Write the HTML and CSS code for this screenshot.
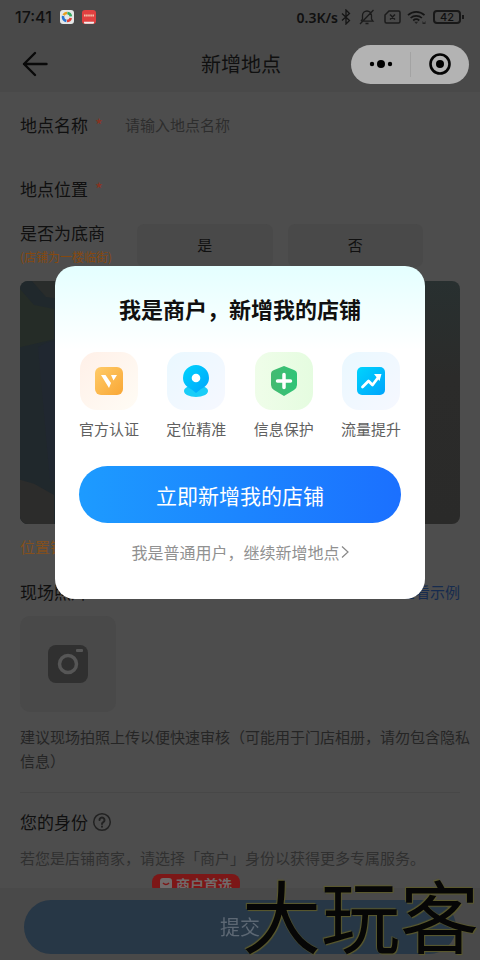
FILE: index.html
```html
<!DOCTYPE html>
<html lang="zh-CN">
<head>
<meta charset="utf-8">
<meta name="viewport" content="width=device-width, initial-scale=1">
<title>新增地点</title>
<link rel="stylesheet" href="styles.css">
</head>
<body>
<div class="status">
  <span class="time">17:41</span>
  <svg class="app" width="14" height="14" viewBox="0 0 14 14"><rect width="14" height="14" rx="3" fill="#e4e8e8"/><g fill="none" stroke-width="2.6"><path d="M3.6 5.2A4 4 0 0 1 7.2 3" stroke="#e8a020"/><path d="M7.4 3a4 4 0 0 1 3.5 3.4" stroke="#35a860"/><path d="M10.8 8A4 4 0 0 1 7 11" stroke="#dc4238"/><path d="M6.4 10.9A4 4 0 0 1 3.1 6" stroke="#2874d0"/></g></svg>
  <svg class="app" width="14" height="14" viewBox="0 0 14 14"><rect width="14" height="14" rx="3" fill="#e04040"/><path d="M2 5.5h10" stroke="#f0c0a8" stroke-width="2" stroke-dasharray="1.6 .5"/><path d="M2 11.8h10v1a1 1 0 0 1-1 1H3a1 1 0 0 1-1-1z" fill="#eee"/></svg>
  <span class="speed">0.3K/s</span>
  <svg class="bt" width="10" height="16" viewBox="0 0 10 16"><path d="M1 4.5l7.5 7L5 15V1l3.500 3.500L1 11.500" fill="none" stroke="#151515" stroke-width="1.300"/></svg>
  <svg class="bell" width="16" height="16" viewBox="0 0 16 16"><path d="M3 12.200h11L12.500 10V6.500a4.500 4.500 0 0 0-9 0V10L2 12.200M6.500 14.500h3M1 15L14.500 1" fill="none" stroke="#1b1b1b" stroke-width="1.300"/></svg>
  <svg class="sim" width="17" height="14" viewBox="0 0 17 14"><path d="M5 1h9.500a1.500 1.500 0 0 1 1.500 1.500v9a1.500 1.500 0 0 1-1.500 1.500h-12A1.500 1.500 0 0 1 1 11.500V5zM6 4.500l5 5m0-5l-5 5" fill="none" stroke="#1b1b1b" stroke-width="1.500"/></svg>
  <svg class="wifi" width="20" height="15" viewBox="0 0 20 15"><path d="M1 5.200a12 12 0 0 1 16.500 0M3.600 8a8.300 8.300 0 0 1 11.300 0M6.200 10.500a4.800 4.800 0 0 1 6.100 0" fill="none" stroke="#151515" stroke-width="1.700"/><path d="M7.200 11.700h4L9.200 14zM15.500 11l1.500 2 1.500-2v3h-3z" fill="#222"/></svg>
  <span class="battery">42</span>
</div>
<header class="nav">
  <button class="back" type="button" aria-label="返回"><svg width="26" height="26" viewBox="0 0 26 26"><path d="M24.500 13H2M13 2L2 13l11 11" fill="none" stroke="#090909" stroke-width="2.400" stroke-linecap="round" stroke-linejoin="round"/></svg></button>
  <h1>新增地点</h1>
  <div class="capsule">
    <button type="button" aria-label="更多"><svg width="24" height="10" viewBox="0 0 24 10"><circle cx="3" cy="5" r="2.200"/><circle cx="12" cy="5" r="4"/><circle cx="21" cy="5" r="2.200"/></svg></button>
    <button type="button" aria-label="关闭"><svg width="22" height="22" viewBox="0 0 22 22"><circle cx="11" cy="11" r="9.500" fill="none" stroke="#050505" stroke-width="2.600"/><circle cx="11" cy="11" r="4"/></svg></button>
  </div>
</header>
<main class="form">
  <div class="row name">
    <label for="place">地点名称<i>*</i></label>
    <input id="place" type="text" placeholder="请输入地点名称">
  </div>
  <h2 class="row place">地点位置<i>*</i></h2>
  <div class="shop">
    <div class="question">是否为底商<small>(店铺为一楼临街)</small></div>
    <button type="button">是</button>
    <button type="button">否</button>
  </div>
  <svg class="map" viewBox="0 0 440 242" preserveAspectRatio="none">
    <defs><linearGradient id="land" x1="0" y1="0" x2="0" y2="1"><stop offset="0" stop-color="#283030"/><stop offset=".4" stop-color="#2b2b2a"/><stop offset="1" stop-color="#2a2a29"/></linearGradient></defs>
    <rect width="440" height="242" fill="url(#land)"/>
    <path d="M0 0h60v242H0z" fill="#20282c"/><path d="M0 8l14 16 20 4v30L0 66z" fill="#252c27"/><path d="M12 0h30v18l-16-2z" fill="#292c2b"/><path d="M0 198l14 4 20 11v29H0z" fill="#2c2c2b"/><path d="M18 66q16-10 24-4v140l-12-3z" fill="#202730"/>
  </svg>
  <p class="warn">位置错误</p>
  <div class="photo-title"><h2>现场照片</h2><a href="#example">查看示例</a></div>
  <button class="upload" type="button" aria-label="上传照片"><svg width="42" height="40" viewBox="0 0 42 40"><rect x="1" y="1" width="40" height="38" rx="8" fill="#303030"/><circle cx="21" cy="20" r="8.500" fill="none" stroke="#565656" stroke-width="3.500"/><rect x="29" y="5" width="7" height="3" rx="1" fill="#565656"/></svg></button>
  <p class="note">建议现场拍照上传以便快速审核（可能用于门店相册，请勿包含隐私信息）</p>
  <h2 class="identity">您的身份<svg width="20" height="20" viewBox="0 0 20 20"><g fill="none" stroke="#222" stroke-linecap="round"><circle cx="10" cy="10" r="8.300" stroke-width="1.500"/><path d="M7.500 8a2.500 2.500 0 1 1 3.800 2.100Q10 10.900 10 12" stroke-width="2"/><path d="M10 14.600v.2" stroke-width="2"/></g></svg></h2>
  <p class="hint">若您是店铺商家，请选择「商户」身份以获得更多专属服务。</p>
  <div class="badge"><svg width="12" height="12" viewBox="0 0 12 12"><rect width="12" height="12" rx="3" fill="#706a6a"/><path d="M3 5q3 3 6 0" fill="none" stroke="#7c1717" stroke-width="1.500"/></svg>商户首选</div>
</main>
<footer class="submit"><button type="button">提交</button><span class="mark">大玩客</span></footer>
<div class="overlay">
  <section class="dialog" role="dialog" aria-labelledby="dialog-title">
    <h2 id="dialog-title">我是商户，新增我的店铺</h2>
    <ul>
      <li><span class="tile gold"><svg width="28" height="28" viewBox="0 0 28 28"><defs><linearGradient id="g" x1="0" y1="0" x2="1" y2="1"><stop stop-color="#ffcb68"/><stop offset="1" stop-color="#f9a735"/></linearGradient></defs><rect width="28" height="28" rx="6" fill="url(#g)"/><path d="M6 8h4.500l5.500 8-2 5zM16 8h6l-3.500 5.500z" fill="#fff"/></svg></span>官方认证</li>
      <li><span class="tile blue"><svg width="28" height="34" viewBox="0 0 28 34"><defs><linearGradient id="b" x1="0" y1="0" x2="1" y2="1"><stop stop-color="#00d4fd"/><stop offset="1" stop-color="#00a4fc"/></linearGradient></defs><ellipse cx="14" cy="27" rx="12" ry="6" fill="#19cdf8"/><path d="M14 1a13 13 0 0 1 13 13c0 6-4 9-8 11l-5 4-5-4c-4-2-8-5-8-11A13 13 0 0 1 14 1z" fill="url(#b)"/><circle cx="14" cy="14" r="4.300" fill="#fff"/></svg></span>定位精准</li>
      <li><span class="tile green"><svg width="28" height="32" viewBox="0 0 28 32"><defs><linearGradient id="s"><stop stop-color="#45ba71"/><stop offset="1" stop-color="#2fc477"/></linearGradient></defs><path d="M14 1l10 4q3 1 3 4v11q0 3-3 5l-10 6-10-6q-3-2-3-5V9q0-3 3-4z" fill="url(#s)"/><path d="M14 9.500v13M7.500 16h13" stroke="#fff" stroke-width="3.500" stroke-linecap="round"/></svg></span>信息保护</li>
      <li><span class="tile blue"><svg width="28" height="28" viewBox="0 0 28 28"><rect width="28" height="28" rx="5" fill="url(#b)"/><path d="M5.500 20l6-6 4 4 6-8" fill="none" stroke="#fff" stroke-width="2.800" stroke-linecap="round" stroke-linejoin="round"/><path d="M17 7h7.500l-2 7z" fill="#fff"/></svg></span>流量提升</li>
    </ul>
    <button class="cta" type="button">立即新增我的店铺</button>
    <a class="skip" href="#continue">我是普通用户，继续新增地点<svg width="8" height="14" viewBox="0 0 8 14"><path d="M1 1.500L7 7l-6 5.500" fill="none" stroke="#888" stroke-width="1.200"/></svg></a>
  </section>
</div>
</body>
</html>
```
FILE: styles.css
```css
* { box-sizing: border-box; }
body {
  margin: 0;
  min-height: 100vh;
  background: #4d4d4d;
  color: #101010;
  font-family: "Noto Sans CJK SC", "Noto Sans", sans-serif;
  font-size: 15px;
  line-height: 24px;
  overflow: hidden;
}
h1, h2, p, ul { margin: 0; padding: 0; font-weight: 400; }
button { border: 0; padding: 0; font: inherit; color: inherit; background: none; }
a { text-decoration: none; }
svg { display: block; flex: none; }

.status {
  display: flex;
  align-items: center;
  height: 34px;
  padding: 0 15px;
  background: #494949;
}
.time { font: 500 16px "Inter", sans-serif; }
.app { margin-left: 8px; }
.speed { margin-left: auto; font: 600 14px "Noto Sans", sans-serif; }
.bt { margin-left: 3px; }
.bell { margin-left: 8px; }
.sim { margin-left: 9px; }
.wifi { margin-left: 6px; }
.battery {
  position: relative;
  width: 28px;
  height: 14px;
  margin: 0 4px 0 6px;
  border: 2px solid #181818;
  border-radius: 4px;
  font: 500 11px/10px "Inter", sans-serif;
  text-align: center;
}
.battery::after {
  content: "";
  position: absolute;
  right: -5px;
  top: 3px;
  width: 2px;
  height: 4px;
  background: #181818;
}
.nav {
  display: grid;
  grid-template-columns: 1fr auto 1fr;
  align-items: center;
  height: 58px;
  padding: 2px 11px 0 22px;
  background: #494949;
}
.nav h1 { font-size: 20px; padding-right: 9px; }
.nav .back { justify-self: start; }
.capsule {
  justify-self: end;
  display: flex;
  width: 118px;
  height: 39px;
  border-radius: 20px;
  background: #b3b3b3;
}
.capsule button { flex: 1; display: grid; place-items: center; }
.capsule button + button { position: relative; }
.capsule button + button::before {
  content: "";
  position: absolute;
  left: 0;
  top: 7px;
  bottom: 7px;
  width: 1px;
  background: #a3a3a3;
}

.form { padding: 1px 20px 0; }
.row { display: flex; align-items: center; height: 64px; font-size: 17px; }
.row i { margin-left: 7px; color: #8a3220; font-style: normal; }
.name input {
  flex: 1;
  min-width: 0;
  margin-left: 22px;
  padding: 0;
  border: 0;
  background: none;
  font: inherit;
  font-size: 15px;
}
.name input::placeholder { color: #2d2d2d; opacity: 1; }
.shop { display: flex; align-items: center; gap: 15px; padding-right: 37px; }
.question { width: 102px; font-size: 17px; }
.question small { display: block; font-size: 12px; color: #86490f; white-space: nowrap; }
.shop button { flex: 1; height: 43px; border-radius: 7px; background: #494949; }
.map { width: 100%; height: 243px; margin-top: 12px; border-radius: 8px; }
.warn { margin-top: 11px; color: #84501c; }
.photo-title { display: flex; justify-content: space-between; align-items: center; margin: 21px 0 12px; }
.photo-title h2 { font-size: 17px; }
.photo-title a { color: #162b4e; }
.upload { display: grid; place-items: center; width: 96px; height: 96px; border-radius: 10px; background: #494949; }
.note { margin: 13px -10px 0 0; padding-bottom: 19px; color: #252525; }
.identity {
  display: flex;
  align-items: center;
  gap: 4px;
  padding-top: 17px;
  border-top: 1px solid #474747;
  font-size: 17px;
}
.hint { margin-top: 12px; color: #303030; white-space: nowrap; }
.badge {
  display: flex;
  align-items: center;
  gap: 4px;
  width: 88px;
  height: 20px;
  margin: 4px 0 0 132px;
  padding: 0 8px;
  border-radius: 8px;
  background: #7c1717;
  color: #706a6a;
  font-size: 14px;
  font-weight: 700;
  white-space: nowrap;
}
.submit { position: fixed; left: 0; right: 0; bottom: 0; padding: 12px 24px 6px; background: #494949; }
.submit button { display: block; width: 100%; height: 54px; border-radius: 27px; background: #273746; color: #5d6874; font-size: 20px; }
.mark {
  position: absolute;
  right: 1px;
  bottom: 4px;
  font-size: 79px;
  line-height: 84px;
  color: #060606;
  text-shadow: 1px 1px 1px #5c5a2c, -1px -1px 1px #5c5a2c;
}

.overlay {
  position: fixed;
  inset: 0;
  display: flex;
  align-items: center;
  justify-content: center;
  padding: 0 55px 95px;
}
.dialog {
  flex: 1;
  max-width: 420px;
  padding: 25px 24px 35px;
  border-radius: 20px;
  background: linear-gradient(#e4ffff, #fff 84px);
  text-align: center;
}
.dialog h2 { font-size: 22px; font-weight: 700; line-height: 34px; }
.dialog ul { display: flex; justify-content: space-between; margin-top: 27px; list-style: none; color: #606060; }
.dialog li { display: grid; justify-items: center; gap: 7px; }
.tile { display: grid; place-items: center; width: 58px; height: 58px; border-radius: 17px; }
.gold { background: linear-gradient(135deg, #fff0e8, #fffcf5); }
.blue { background: linear-gradient(135deg, #eaf8ff, #f6f8ff); }
.green { background: linear-gradient(90deg, #effde9, #e5fce0); }
.cta {
  display: block;
  width: 100%;
  height: 57px;
  margin-top: 25px;
  border-radius: 29px;
  background: linear-gradient(90deg, #1d9bff, #1b70ff);
  color: #fff;
  font-size: 21px;
}
.skip { display: flex; align-items: center; justify-content: center; gap: 1px; margin-top: 17px; color: #919191; font-size: 16px; }
```
